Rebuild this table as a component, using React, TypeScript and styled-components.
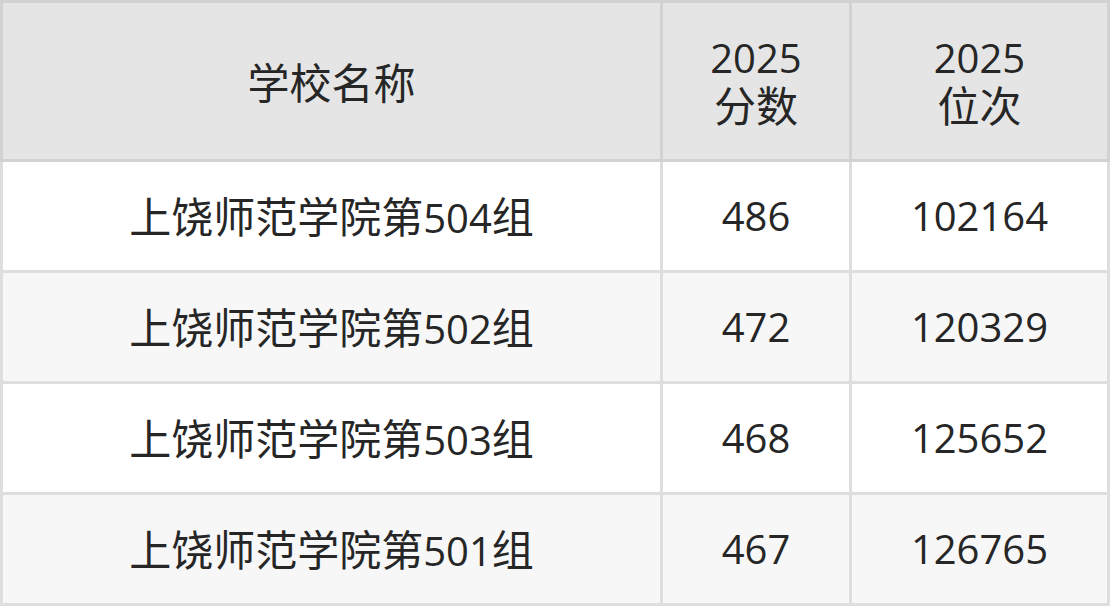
import styled, { createGlobalStyle } from "styled-components";

const GlobalStyle = createGlobalStyle`
  html, body {
    margin: 0;
    padding: 0;
    background: #ffffff;
  }
  body {
    font-family: "Open Sans", "Noto Sans CJK SC", sans-serif;
  }
`;

const rows = [
  { group: "504", score: "486", rank: "102164" },
  { group: "502", score: "472", rank: "120329" },
  { group: "503", score: "468", rank: "125652" },
  { group: "501", score: "467", rank: "126765" },
];

function App() {
  return (
    <>
      <GlobalStyle />
      <Table>
        <HeadCell $first>
          <Han>学校名称</Han>
        </HeadCell>
        <HeadCell>
          <Line>2025</Line>
          <Line>
            <Han>分数</Han>
          </Line>
        </HeadCell>
        <HeadCell>
          <Line>2025</Line>
          <Line>
            <Han>位次</Han>
          </Line>
        </HeadCell>
        {rows.map((r, i) => (
          <Row key={r.group} $striped={i % 2 === 1}>
            <Cell $first>
              <span>
                <Han>上饶师范学院第</Han>
                {r.group}
                <Han>组</Han>
              </span>
            </Cell>
            <Cell>{r.score}</Cell>
            <Cell>{r.rank}</Cell>
          </Row>
        ))}
      </Table>
    </>
  );
}

export default App;

const Table = styled.div`
  display: grid;
  grid-template-columns: 663px 189px 258px;
  width: 1110px;
  color: #262626;
  font-size: 40px;
`;

const Row = styled.div<{ $striped: boolean }>`
  display: contents;
  --row-bg: ${(p) => (p.$striped ? "#f7f7f7" : "#ffffff")};
`;

// CJK glyphs sit a touch larger than the digits in the reference
const Han = styled.span`
  font-family: "Noto Sans CJK SC", sans-serif;
  font-size: 42px;
  line-height: 46px;
`;

const Line = styled.div`
  height: 46px;
  line-height: 46px;
`;

const BaseCell = styled.div<{ $first?: boolean }>`
  box-sizing: border-box;
  display: flex;
  flex-direction: column;
  align-items: center;
  justify-content: center;
  text-align: center;
  line-height: 46px;
  border-right: 3px solid;
  border-bottom: 3px solid;
  border-left: ${(p) => (p.$first ? "3px solid" : "none")};
`;

const HeadCell = styled(BaseCell)`
  height: 162px;
  border-top: 3px solid;
  border-color: #d2d2d2;
  background: #e5e5e5;
`;

const Cell = styled(BaseCell)`
  height: 111px;
  border-color: #dedede;
  background: var(--row-bg);
`;
